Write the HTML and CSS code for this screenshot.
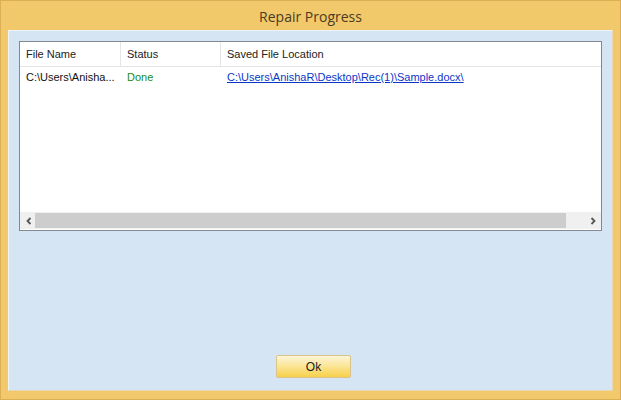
FILE: index.html
```html
<!DOCTYPE html>
<html lang="en">
<head>
  <meta charset="UTF-8" />
  <title>Repair Progress</title>
  <link rel="stylesheet" href="styles.css">
</head>
<body>
  <div class="window">
    <div class="titlebar">Repair Progress</div>
    <div class="client">
      <div class="listview">
        <div class="row header">
          <div class="col c1">File Name</div>
          <div class="col c2">Status</div>
          <div class="col c3">Saved File Location</div>
        </div>
        <div class="row item">
          <div class="col c1">C:\Users\Anisha...</div>
          <div class="col c2 done">Done</div>
          <div class="col c3"><a href="#">C:\Users\AnishaR\Desktop\Rec(1)\Sample.docx\</a></div>
        </div>
        <div class="spacer"></div>
        <div class="hscroll">
          <span class="arrow"><svg width="8" height="8" viewBox="0 0 8 8"><path d="M5.5 1 L2.5 4 L5.5 7" fill="none" stroke="#555" stroke-width="1.8"/></svg></span>
          <div class="thumb"></div>
          <span class="arrow"><svg width="8" height="8" viewBox="0 0 8 8"><path d="M2.5 1 L5.5 4 L2.5 7" fill="none" stroke="#555" stroke-width="1.8"/></svg></span>
        </div>
      </div>
      <div class="actions">
        <button class="ok">Ok</button>
      </div>
    </div>
  </div>
</body>
</html>
```

FILE: styles.css
```css
body { margin: 0; font-family: "Liberation Sans", Arial, sans-serif; font-size: 11px; }
.window { width: 621px; height: 400px; box-sizing: border-box; background: #f1c96b; border: 1px solid #dcae55; padding: 0 7px 8px 7px; display: flex; flex-direction: column; }
.titlebar { height: 29px; line-height: 31px; text-align: center; font-family: "Open Sans", sans-serif; font-size: 14px; color: #4b3b22; }
.client { flex: 1; background: #d6e5f3; border-top: 1px solid #eef3f8; border-left: 1px solid #eef3f8; border-right: 1px solid #e8d7b0; border-bottom: 1px solid #e8d7b0; padding: 10px 10px 11px 10px; display: flex; flex-direction: column; }
.listview { height: 188px; background: white; border: 1px solid #828790; display: flex; flex-direction: column; }
.row { display: flex; }
.header { height: 24px; border-bottom: 1px solid #e5e5e5; }
.header .col { line-height: 24px; border-right: 1px solid #e5e5e5; color: #222; }
.col { padding-left: 6px; box-sizing: border-box; color: #111; white-space: nowrap; }
.c1 { width: 101px; }
.c2 { width: 100px; }
.c3 { flex: 1; border-right: none !important; }
.item { height: 20px; }
.item .col { line-height: 20px; }
.done { color: #1a8a1a; }
.item a { color: #0b37c9; }
.spacer { flex: 1; }
.hscroll { height: 17px; background: #f0f0f0; display: flex; align-items: center; margin-bottom: 1px; }
.arrow { width: 13px; height: 17px; display: flex; align-items: center; justify-content: center; }
.arrow:first-child { margin-left: 2px; }
.arrow:last-child { margin-right: 2px; }
.thumb { flex: 1; height: 15px; background: #cdcdcd; margin: 0 20px 0 0; }
.actions { flex: 1; display: flex; align-items: flex-end; justify-content: center; padding-bottom: 1px; padding-left: 6px; }
.ok { width: 75px; height: 23px; border: 1px solid #d8c38a; border-radius: 2px; background: linear-gradient(#fdf5d8, #fbe69a 45%, #f7d04a); font-family: "Liberation Sans", Arial, sans-serif; font-size: 12px; color: #222; padding: 0; }
```
